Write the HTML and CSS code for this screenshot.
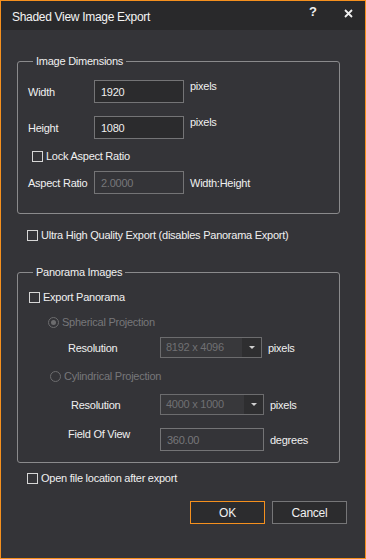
FILE: index.html
```html
<!DOCTYPE html>
<html lang="en">
<head>
    <meta charset="UTF-8">
    <meta name="viewport" content="width=device-width, initial-scale=1.0">
    <title>Shaded View Image Export</title>
    <link rel="stylesheet" href="styles.css">
</head>
<body>
    <div class="dialog">
        <div class="titlebar">
            <span class="title">Shaded View Image Export</span>
            <span class="help">?</span>
            <svg class="close" width="9" height="9" viewBox="0 0 9 9">
                <path d="M1 1 L8 8 M8 1 L1 8" stroke="#f0f0f0" stroke-width="1.8" fill="none"/>
            </svg>
        </div>

        <div class="content">
            <fieldset class="group dims">
                <legend>Image Dimensions</legend>

                <div class="row field-row first">
                    <label class="lbl">Width</label>
                    <input class="field" type="text" value="1920">
                    <span class="unit up">pixels</span>
                </div>

                <div class="row field-row">
                    <label class="lbl">Height</label>
                    <input class="field" type="text" value="1080">
                    <span class="unit up">pixels</span>
                </div>

                <div class="row check-row lock">
                    <span class="box"></span>
                    <span>Lock Aspect Ratio</span>
                </div>

                <div class="row field-row ratio">
                    <label class="lbl">Aspect Ratio</label>
                    <input class="field disabled" type="text" value="2.0000" disabled>
                    <span class="unit">Width:Height</span>
                </div>
            </fieldset>

            <div class="row check-row ultra">
                <span class="box"></span>
                <span>Ultra High Quality Export (disables Panorama Export)</span>
            </div>

            <fieldset class="group pano">
                <legend>Panorama Images</legend>

                <div class="row check-row export">
                    <span class="box"></span>
                    <span>Export Panorama</span>
                </div>

                <div class="row radio-row spherical">
                    <span class="radio checked"></span>
                    <span>Spherical Projection</span>
                </div>

                <div class="row combo-row res1">
                    <label class="lbl">Resolution</label>
                    <div class="combo">
                        <span class="combo-text">8192 x 4096</span>
                        <span class="combo-btn"><span class="arrow"></span></span>
                    </div>
                    <span class="unit">pixels</span>
                </div>

                <div class="row radio-row cylindrical">
                    <span class="radio"></span>
                    <span>Cylindrical Projection</span>
                </div>

                <div class="row combo-row res2">
                    <label class="lbl">Resolution</label>
                    <div class="combo wide">
                        <span class="combo-text">4000 x 1000</span>
                        <span class="combo-btn"><span class="arrow"></span></span>
                    </div>
                    <span class="unit">pixels</span>
                </div>

                <div class="row combo-row fov">
                    <label class="lbl up">Field Of View</label>
                    <input class="field disabled wide" type="text" value="360.00" disabled>
                    <span class="unit">degrees</span>
                </div>
            </fieldset>

            <div class="row check-row open">
                <span class="box"></span>
                <span>Open file location after export</span>
            </div>

            <div class="buttons">
                <button class="btn primary">OK</button>
                <button class="btn">Cancel</button>
            </div>
        </div>
    </div>
</body>
</html>
```

FILE: styles.css
```css
* {
    margin: 0;
    padding: 0;
    box-sizing: border-box;
    font-family: 'Liberation Sans', Arial, sans-serif;
    letter-spacing: -0.25px;
}

body {
    background: #343438;
    width: 366px;
    height: 559px;
    overflow: hidden;
}

.dialog {
    width: 366px;
    height: 559px;
    border: 1px solid #f5901e;
    background: #343438;
    color: #f0f0f0;
    font-size: 11px;
}

/* Заголовок окна */
.titlebar {
    height: 29px;
    background: #29292b;
    display: flex;
    align-items: center;
    padding-left: 11px;
    position: relative;
}

.title {
    font-size: 12px;
    letter-spacing: -0.3px;
    color: #f4f4f4;
    margin-top: 2px;
}

.help {
    position: absolute;
    left: 308px;
    top: 3px;
    font-size: 13px;
    font-weight: bold;
}

.close {
    position: absolute;
    left: 343px;
    top: 8px;
}

.content {
    padding: 0 25px 0 16px;
}

/* Группы */
.group {
    border: 1px solid #8a8a8c;
    border-radius: 3px;
    padding: 0 10px;
}

.group legend {
    margin-left: 5px;
    padding: 0 3px 0 3px;
    line-height: 14px;
    font-size: 11px;
}

.dims {
    margin-top: 24px;
    padding-top: 12px;
    padding-bottom: 19px;
}

.pano {
    margin-top: 23px;
    padding-top: 11px;
    padding-bottom: 11px;
}

.row {
    display: flex;
    align-items: center;
}

.lbl {
    display: block;
}

.field-row .lbl {
    width: 66px;
}

.field-row + .field-row {
    margin-top: 13px;
}

.field {
    width: 90px;
    height: 23px;
    background: #2b2b2d;
    border: 1px solid #747476;
    color: #f0f0f0;
    font-size: 11px;
    padding-left: 6px;
    outline: none;
}

.field.disabled {
    background: #343438;
    color: #77777a;
}

.field.wide {
    width: 104px;
}

.unit {
    margin-left: 6px;
}

.unit.up {
    align-self: flex-start;
}

.lbl.up {
    align-self: flex-start;
}

/* Флажки и переключатели */
.check-row,
.radio-row {
    height: 14px;
}

.box {
    width: 11px;
    height: 11px;
    border: 1px solid #d6d6d6;
    margin-right: 3px;
}

.lock {
    margin-top: 10px;
    padding-left: 4px;
}

.ratio {
    margin-top: 8px;
}

.ultra {
    margin-top: 14px;
    padding-left: 10px;
}

.export {
    padding-left: 1px;
}

.radio-row {
    color: #77777a;
}

.radio {
    width: 11px;
    height: 11px;
    border: 1px solid #6c6c6e;
    border-radius: 50%;
    margin-right: 3px;
    display: flex;
    align-items: center;
    justify-content: center;
}

.radio.checked::after {
    content: "";
    width: 5px;
    height: 5px;
    border-radius: 50%;
    background: #6c6c6e;
}

.spherical {
    margin-top: 11px;
    padding-left: 20px;
}

.cylindrical {
    margin-top: 11px;
    padding-left: 22px;
}

.combo-row .lbl {
    padding-left: 40px;
    width: 132px;
}

.res1 {
    margin-top: 8px;
}

.res2 {
    margin-top: 11px;
}

.res2 .lbl {
    padding-left: 43px;
}

.fov {
    margin-top: 13px;
}

.combo {
    width: 102px;
    height: 21px;
    border: 1px solid #6c6c6e;
    display: flex;
    background: #2e2e30;
}

.combo.wide {
    width: 104px;
}

.combo-text {
    flex: 1;
    background: #38383b;
    color: #707073;
    padding-left: 5px;
    line-height: 19px;
}

.combo-btn {
    width: 19px;
    display: flex;
    align-items: center;
    justify-content: center;
}

.arrow {
    width: 0;
    height: 0;
    border-left: 3px solid transparent;
    border-right: 3px solid transparent;
    border-top: 3px solid #d0d0d0;
}

.open {
    margin-top: 8px;
    padding-left: 10px;
}

/* Кнопки */
.buttons {
    display: flex;
    justify-content: flex-end;
    gap: 7px;
    margin-top: 16px;
    margin-right: -7px;
}

.btn {
    width: 75px;
    height: 23px;
    background: #2c2c2e;
    border: 1px solid #767678;
    color: #f0f0f0;
    font-size: 12px;
}

.btn.primary {
    border-color: #f5901e;
}
```
